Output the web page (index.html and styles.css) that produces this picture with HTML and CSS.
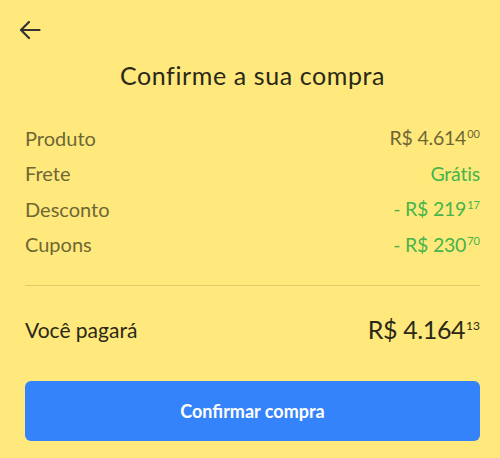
FILE: index.html
```html
<!DOCTYPE html>
<html lang="pt-BR">
<head>
<meta charset="utf-8">
<title>Confirme a sua compra</title>
<link rel="stylesheet" href="styles.css">
</head>
<body>
<main class="screen">
  <header class="topbar">
    <button class="back" aria-label="Voltar">
      <svg width="22" height="20" viewBox="0 0 22 20" fill="none" stroke="#333" stroke-width="2.2" stroke-linecap="round" stroke-linejoin="round">
        <path d="M20.5 10H2.5"/>
        <path d="M10 2L2 10l8 8"/>
      </svg>
    </button>
  </header>
  <h1 class="title">Confirme a sua compra</h1>
  <ul class="summary">
    <li class="row"><span class="label">Produto</span><span class="value">R$ 4.614<span class="cents">00</span></span></li>
    <li class="row"><span class="label">Frete</span><span class="value green">Grátis</span></li>
    <li class="row"><span class="label">Desconto</span><span class="value green">- R$ 219<span class="cents">17</span></span></li>
    <li class="row"><span class="label">Cupons</span><span class="value green">- R$ 230<span class="cents">70</span></span></li>
  </ul>
  <hr class="divider">
  <div class="total">
    <span class="total-label">Você pagará</span>
    <span class="total-value">R$ 4.164<span class="cents big">13</span></span>
  </div>
  <button class="confirm">Confirmar compra</button>
</main>
</body>
</html>
```

FILE: styles.css
```css
* { box-sizing: border-box; }
html, body {
  margin: 0;
  padding: 0;
  background: #ffe97c;
  font-family: "Lato", "Open Sans", sans-serif;
}
.screen {
  width: 500px;
  height: 458px;
  padding: 0 20px 0 25px;
  display: flex;
  flex-direction: column;
}
.topbar {
  height: 60px;
  display: flex;
  align-items: center;
  margin-left: -6px;
}
.back {
  background: none;
  border: 0;
  padding: 0;
  width: 22px;
  height: 20px;
  display: flex;
  cursor: pointer;
}
.title {
  margin: 0;
  height: 30px;
  line-height: 30px;
  font-size: 25px;
  font-weight: 400;
  letter-spacing: 0.6px;
  color: #2b2817;
  text-align: center;
}
.summary {
  list-style: none;
  margin: 30px 0 0;
  padding: 0;
}
.row {
  height: 35.5px;
  display: flex;
  justify-content: space-between;
  align-items: center;
  font-size: 20px;
  color: #6e6734;
}
.value { white-space: nowrap; font-size: 19.5px; letter-spacing: -0.2px; }
.green { color: #46b44c; }
.cents {
  font-size: 11px;
  vertical-align: 7px;
  margin-left: 1px;
  letter-spacing: 0;
}
.cents.big {
  font-size: 12px;
  vertical-align: 9px;
  margin-left: 1px;
}
.divider {
  margin: 23px 0 0;
  border: 0;
  height: 1px;
  background: #e0ca6c;
}
.total {
  height: 40px;
  margin-top: 23px;
  display: flex;
  justify-content: space-between;
  align-items: center;
  color: #2b2817;
}
.total-label { font-size: 21px; }
.total-value { font-size: 25px; white-space: nowrap; letter-spacing: -0.4px; }
.confirm {
  margin-top: 32px;
  height: 60px;
  width: 100%;
  border: 0;
  border-radius: 6px;
  background: #3483fa;
  color: #fff;
  font-family: inherit;
  font-size: 18px;
  font-weight: 700;
  cursor: pointer;
}
```
